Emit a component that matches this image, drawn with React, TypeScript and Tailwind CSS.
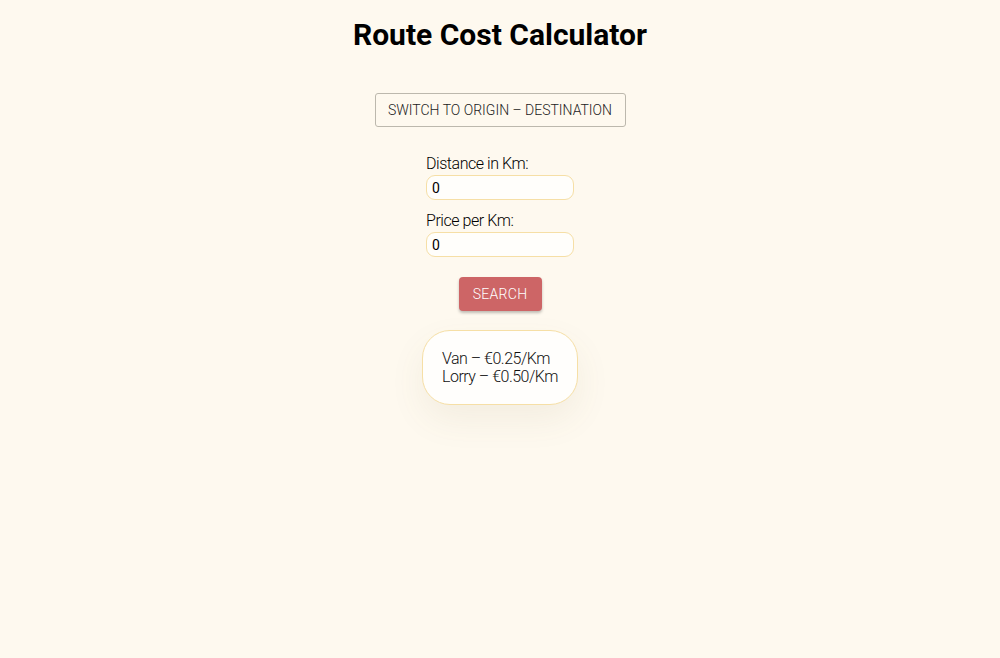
import { useState } from 'react';

const App = () => {
  const [distance, setDistance] = useState('0');
  const [price, setPrice] = useState('0');

  return (
    <div className="min-h-[658px] w-full bg-[#fef9ef] font-['Roboto',sans-serif] text-black">
      <div className="flex flex-col items-center pt-[17px]">
        <h1 className="text-[30px] font-bold leading-[36px]">Route Cost Calculator</h1>

        <button className="mt-[40px] h-[34px] w-[251px] rounded-[3px] border border-[#bcb8ad] bg-transparent text-[14px] font-light text-[#222]">
          SWITCH TO ORIGIN – DESTINATION
        </button>

        <div className="mt-[27px] flex w-[148px] flex-col">
          <label className="text-[16px] font-light leading-[20px] tracking-[-0.45px]">Distance in Km:</label>
          <input
            className="mt-[1px] h-[25px] w-[148px] rounded-[9px] border border-[#f6dfa6] bg-[#fffefb] px-[5px] text-[14px] text-black outline-none"
            value={distance}
            onChange={(e) => setDistance(e.target.value)}
          />
          <label className="mt-[11px] text-[16px] font-light leading-[20px] tracking-[-0.45px]">Price per Km:</label>
          <input
            className="mt-[1px] h-[25px] w-[148px] rounded-[9px] border border-[#f6dfa6] bg-[#fffefb] px-[5px] text-[14px] text-black outline-none"
            value={price}
            onChange={(e) => setPrice(e.target.value)}
          />
        </div>

        <button className="mt-[20px] h-[34px] w-[83px] rounded-[4px] bg-[#cd6566] text-[14px] font-light tracking-[0.3px] text-white shadow-[0_2px_3px_rgba(0,0,0,0.25)]">
          SEARCH
        </button>

        <div className="mt-[19px] flex h-[75px] w-[156px] flex-col justify-center rounded-[28px] border border-[#f6dfa6] bg-[#fffefc] pl-[19px] text-[16px] font-light leading-[18px] tracking-[-0.5px] text-[#111] shadow-[0_15px_35px_rgba(120,100,60,0.08)]">
          <span>Van – €0.25/Km</span>
          <span>Lorry – €0.50/Km</span>
        </div>
      </div>
    </div>
  );
};

export default App;
